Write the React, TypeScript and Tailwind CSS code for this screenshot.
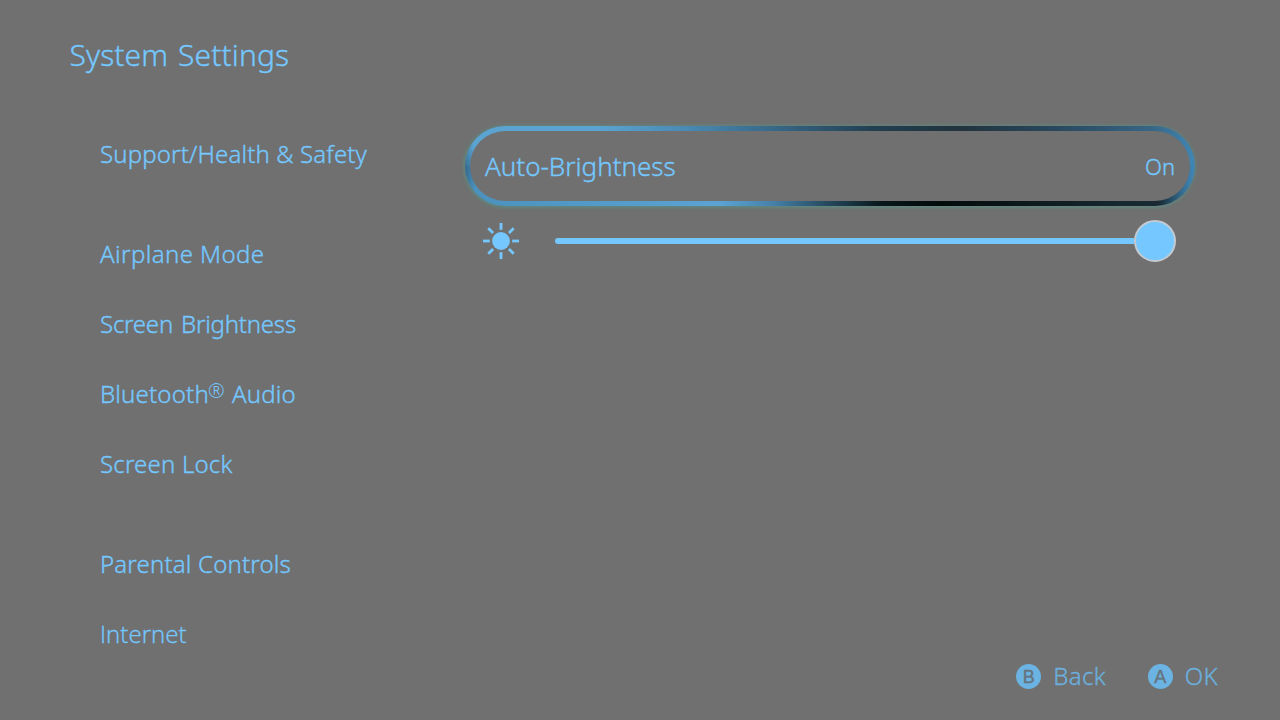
import React from "react";
import { clsx } from "clsx";

interface MenuEntry {
  label: string;
  className?: string;
}

const menuGroups: MenuEntry[][] = [
  [{ label: "Support/Health & Safety", className: "tracking-[0.15px]" }],
  [
    { label: "Airplane Mode", className: "tracking-[0.42px]" },
    {
      label: "Screen Brightness",
      className: "tracking-[-0.22px] [word-spacing:2px]",
    },
    { label: "Bluetooth® Audio", className: "tracking-[0.18px]" },
    { label: "Screen Lock", className: "tracking-[0.2px]" },
  ],
  [
    { label: "Parental Controls", className: "tracking-[0.18px]" },
    // Open Sans has the plain capital I
    { label: "Internet", className: "font-['Open_Sans',sans-serif] tracking-[0.05px]" },
  ],
];

const rayAngles = [0, 45, 90, 135, 180, 225, 270, 315];

const SunIcon: React.FC = () => (
  <svg width="36" height="36" viewBox="0 0 36 36" className="shrink-0">
    <circle cx="18" cy="18" r="8.9" fill="#74c8ff" />
    {rayAngles.map((angle) => (
      <path
        key={angle}
        d="M18 0v6.8"
        stroke="#74c8ff"
        strokeWidth="2.8"
        transform={`rotate(${angle} 18 18)`}
      />
    ))}
  </svg>
);

const MenuItem: React.FC<MenuEntry> = ({ label, className }) => {
  const [before, after] = label.split("®");
  return (
    <li className={clsx("h-[70px] flex items-center whitespace-pre", className)}>
      <span className="h-8">
        {before}
        {after !== undefined && (
          <>
            <span className="inline-block h-4 leading-4 text-[20px] tracking-normal relative -top-[5px] -left-px [-webkit-text-stroke:0]">
              ®
            </span>
            {after}
          </>
        )}
      </span>
    </li>
  );
};

const ButtonHint: React.FC<{ button: string; label: string }> = ({
  button,
  label,
}) => (
  <div className="flex items-center gap-3">
    <span className="size-[25px] rounded-full bg-[#6bb3e2] text-[#66747e] font-['Liberation_Sans',sans-serif] text-[18px] leading-none font-normal [-webkit-text-stroke:0.4px] pt-px flex items-center justify-center">
      {button}
    </span>
    <span className="text-[24px] leading-[30px] tracking-[0.3px]">{label}</span>
  </div>
);

export default function App() {
  return (
    <div className="relative w-[1280px] h-[720px] overflow-hidden bg-[#707070] text-[#74c8ff] font-light font-['Noto_Sans',sans-serif] [-webkit-text-stroke:0.35px] flex flex-col">
      <header className="h-[110px] shrink-0 pl-[69.5px] flex items-center">
        <h1 className="text-[30px] leading-[40px] tracking-[0.1px] [word-spacing:2px]">
          System Settings
        </h1>
      </header>

      <div className="flex flex-1 min-h-0">
        <nav className="w-[465px] shrink-0 pl-[100px] pt-[9px] flex flex-col gap-[30px] text-[24px] leading-[32px]">
          {menuGroups.map((group) => (
            <ul key={group[0].label}>
              {group.map((entry) => (
                <MenuItem key={entry.label} {...entry} />
              ))}
            </ul>
          ))}
        </nav>

        <main className="w-[730px] pt-4">
          {/* Focused row: ring colours run separately along the top and bottom edge */}
          <div className="h-20 rounded-full p-[5px] shadow-[-0.5px_0.5px_4px_rgba(75,165,145,0.75)] bg-no-repeat bg-[radial-gradient(ellipse_12px_34px_at_0_44px,#346a8f,transparent),linear-gradient(90deg,#5ba4d1_0,#5ba4d1_18%,#4a8ab5_30%,#386989_42%,#223f50_56%,#21333e_68%,#29485e_81%,#376685_94%,#4187b5_100%),linear-gradient(90deg,#4b91bd_0,#5ba3d2_35%,#4682ab_42%,#294d64_49%,#08171b_57%,#030a0a_65%,#172830_90%,#192a34_95%,#3b7ba6_99%,#4187b5_100%)] bg-size-[100%_100%,100%_50%,100%_50%] bg-position-[0_0,0_0,0_100%]">
            <div className="h-full rounded-full bg-[#707070] flex items-center justify-between px-[15px]">
              <span className="text-[26px] leading-[36px]">Auto-Brightness</span>
              <span className="text-[22px] leading-[30px]">On</span>
            </div>
          </div>

          <div className="mt-[14px] h-[42px] pl-[18px] pr-[19px] flex items-center">
            <SunIcon />
            <div className="ml-9 h-1.5 flex-1 rounded-l-full bg-[#74c8ff]" />
            <div className="size-[42px] shrink-0 rounded-full bg-[#74c8ff] border-2 border-[#c3cad1]" />
          </div>
        </main>
      </div>

      <footer className="absolute right-[62px] bottom-[29px] flex gap-[42px] text-[#6bafdd]">
        <ButtonHint button="B" label="Back" />
        <ButtonHint button="A" label="OK" />
      </footer>
    </div>
  );
}
